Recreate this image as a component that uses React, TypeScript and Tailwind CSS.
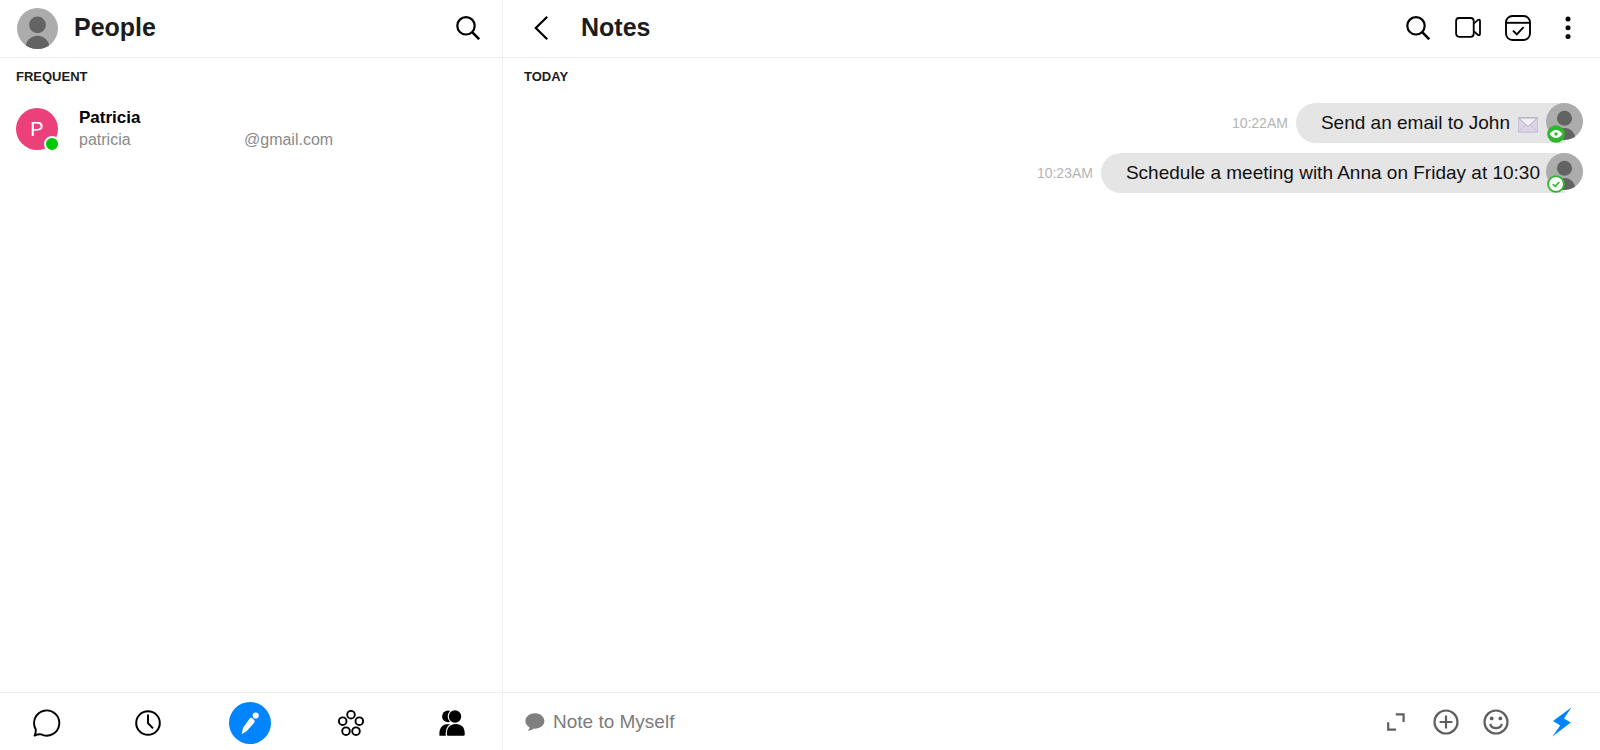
import React, { useState } from "react";

type IconProps = { className?: string };

function SearchIcon({ className }: IconProps) {
  return (
    <svg viewBox="0 0 24 24" className={className} fill="none" stroke="currentColor" aria-hidden="true">
      <circle cx="10" cy="9.8" r="8.7" strokeWidth="2.2" />
      <path d="M16.2 16.2L23.2 23.2" strokeWidth="2.6" />
    </svg>
  );
}

function PersonAvatar({ className }: IconProps) {
  return (
    <svg viewBox="0 0 42 42" className={className} role="img" aria-label="My profile">
      <defs>
        <clipPath id="avatar-round">
          <circle cx="21" cy="21" r="21" />
        </clipPath>
      </defs>
      <g clipPath="url(#avatar-round)">
        <rect width="42" height="42" fill="#acacac" />
        <circle cx="21" cy="17.3" r="8.6" fill="#636363" />
        <ellipse cx="21" cy="41" rx="12.3" ry="12.6" fill="#636363" />
      </g>
    </svg>
  );
}

function BackIcon() {
  return (
    <svg viewBox="0 0 14 24" className="h-6 w-[14px]" fill="none" stroke="currentColor" strokeWidth="2.2" aria-hidden="true">
      <path d="M13.2 0.8L1.8 12L13.2 23.2" />
    </svg>
  );
}

function VideoIcon() {
  return (
    <svg viewBox="0 0 26 26" className="size-[26px]" fill="none" stroke="currentColor" strokeWidth="1.8" aria-hidden="true">
      <rect x="1.1" y="3" width="17.6" height="18.8" rx="3" />
      <path d="M19 8.4L23 4.9Q25 3.9 25 6V18.8Q25 20.9 23 19.9L19 16.4" />
    </svg>
  );
}

function TaskIcon() {
  return (
    <svg viewBox="0 0 26 26" className="size-[26px]" fill="none" stroke="currentColor" strokeWidth="1.9" aria-hidden="true">
      <rect x="1" y="1" width="24" height="24" rx="6.4" />
      <path d="M1 7.8H25" />
      <path d="M8 15.6L11.8 19.4L18.6 12.2" />
    </svg>
  );
}

function DotsIcon() {
  return (
    <svg viewBox="0 0 6 24" className="h-6 w-[6px]" fill="currentColor" aria-hidden="true">
      <circle cx="3" cy="3" r="2.5" />
      <circle cx="3" cy="11.8" r="2.5" />
      <circle cx="3" cy="20.6" r="2.5" />
    </svg>
  );
}

function ChatIcon() {
  return (
    <svg viewBox="0 0 28 28" className="size-7" fill="none" stroke="currentColor" strokeWidth="1.9" strokeLinejoin="round" aria-hidden="true">
      <path d="M1.6 26.6C2.6 24.4 2.9 22.6 2.8 20.4A12.6 12.6 0 1 1 8.2 25.4C6 25.1 3.8 25.6 1.6 26.6Z" />
    </svg>
  );
}

function ClockIcon() {
  return (
    <svg viewBox="0 0 26 26" className="size-[26px]" fill="none" stroke="currentColor" strokeWidth="2" aria-hidden="true">
      <circle cx="13" cy="13" r="11.8" />
      <path d="M13 4.6V13.2L18 18.4" />
    </svg>
  );
}

function PencilIcon() {
  return (
    <svg viewBox="0 0 42 42" className="size-[42px]" fill="#ffffff" aria-hidden="true">
      <circle cx="26.7" cy="13.5" r="3.1" />
      <path d="M20.2 17.2Q21.8 15 23.4 16.2L25.2 17.9Q26.4 19.4 25 21L17.8 29L12.7 32.2L14 25.8Z" />
    </svg>
  );
}

function GroupsIcon() {
  return (
    <svg viewBox="0 0 26 26" className="size-[26px]" fill="none" stroke="currentColor" strokeWidth="1.9" aria-hidden="true">
      <circle cx="13" cy="4.7" r="3.8" />
      <circle cx="4.7" cy="11.2" r="3.8" />
      <circle cx="21.3" cy="11.2" r="3.8" />
      <circle cx="8" cy="21.2" r="3.8" />
      <circle cx="18" cy="21.2" r="3.8" />
    </svg>
  );
}

function PeopleIcon() {
  return (
    <svg viewBox="0 0 26 26" className="size-[26px]" fill="currentColor" aria-hidden="true">
      <circle cx="9" cy="6.4" r="5.9" />
      <path d="M0.4 25.7V23C0.4 18.4 3.2 14.8 7.4 14.2L13 14V25.7Z" />
      <path
        d="M7.9 24.7C7.4 18 10.8 14 16.8 14S26.2 18 25.7 24.7Q25.6 25.7 24.7 25.7H8.9Q8 25.7 7.9 24.7Z"
        stroke="#ffffff"
        strokeWidth="2.4"
        paintOrder="stroke"
      />
      <circle cx="16" cy="6.5" r="6.2" stroke="#ffffff" strokeWidth="2.2" paintOrder="stroke" />
    </svg>
  );
}

function BubbleIcon() {
  return (
    <svg viewBox="0 0 20 18" className="h-[18px] w-5 shrink-0" fill="#7f7f7f" aria-hidden="true">
      <path d="M10 0.3C4.6 0.3 0.4 3.7 0.4 8C0.4 10.8 2.1 13.2 4.7 14.5C4.5 15.8 3.7 16.9 2.5 17.7C4.9 17.8 7.2 17 8.8 15.6C14.8 16 19.4 12.5 19.4 8C19.4 3.7 15.2 0.3 10 0.3Z" />
    </svg>
  );
}

function ExpandIcon() {
  return (
    <svg viewBox="0 0 18 18" className="size-[18px]" fill="none" stroke="currentColor" strokeWidth="2.2" aria-hidden="true">
      <path d="M8.8 1.4H16.6V9" />
      <path d="M1.2 9.2V16.6H9" />
    </svg>
  );
}

function PlusIcon() {
  return (
    <svg viewBox="0 0 26 26" className="size-[26px]" fill="none" stroke="currentColor" strokeWidth="2.2" aria-hidden="true">
      <circle cx="13" cy="13" r="11.5" />
      <path d="M13 6.6V19.4M6.6 13H19.4" />
    </svg>
  );
}

function SmileIcon() {
  return (
    <svg viewBox="0 0 26 26" className="size-[26px]" fill="none" stroke="currentColor" strokeWidth="2.2" aria-hidden="true">
      <circle cx="13" cy="13" r="11.5" />
      <path d="M7 15C8.2 17.9 10.4 19.2 13 19.2S17.8 17.9 19 15" />
      <circle cx="8.7" cy="9.4" r="1.9" fill="currentColor" stroke="none" />
      <circle cx="17.3" cy="9.4" r="1.9" fill="currentColor" stroke="none" />
    </svg>
  );
}

function BoltIcon() {
  return (
    <svg viewBox="0 0 20 30" className="h-[30px] w-5" fill="#0084ff" aria-hidden="true">
      <path d="M19.6 0.2L1 14L8.2 18.6L0.2 29.8L18.8 15.6L12 11.4Z" />
    </svg>
  );
}

function EnvelopeIcon() {
  return (
    <svg viewBox="0 0 20 16" className="h-4 w-5" role="img" aria-label="Envelope">
      <rect x="0.4" y="0.8" width="19.2" height="14.4" rx="0.6" fill="#dcd5e8" stroke="#bdb5cc" strokeWidth="0.8" />
      <path d="M0.8 14.8L7.4 8M19.2 14.8L12.6 8" stroke="#c4bcd2" strokeWidth="0.8" fill="none" />
      <path d="M0.6 1L10 9.4L19.4 1Z" fill="#f3f0f8" stroke="#aaa2ba" strokeWidth="0.9" />
    </svg>
  );
}

function SeenBadge() {
  return (
    <svg viewBox="0 0 18 18" className="size-[18px]" role="img" aria-label="Seen">
      <circle cx="9" cy="9" r="8.8" fill="#2eb82e" />
      <path d="M2.6 9C4.4 6.2 6.6 4.9 9 4.9S13.6 6.2 15.4 9C13.6 11.8 11.4 13.1 9 13.1S4.4 11.8 2.6 9Z" fill="#ffffff" />
      <circle cx="9" cy="9" r="1.7" fill="#2eb82e" />
    </svg>
  );
}

function SentBadge() {
  return (
    <svg viewBox="0 0 18 18" className="size-[18px]" role="img" aria-label="Sent">
      <circle cx="9" cy="9" r="7.9" fill="#ffffff" stroke="#2eb82e" strokeWidth="1.9" />
      <path d="M5.8 9.2L8.2 11.3L12.2 7" fill="none" stroke="#2eb82e" strokeWidth="1.7" />
    </svg>
  );
}

type IconButtonProps = { label: string; className: string; children: React.ReactNode };

function IconButton({ label, className, children }: IconButtonProps) {
  return (
    <button type="button" aria-label={label} className={`flex shrink-0 items-center justify-center ${className}`}>
      {children}
    </button>
  );
}

type Message = { time: string; text: string; envelope: boolean; seen: boolean };

const messages: Message[] = [
  { time: "10:22AM", text: "Send an email to John", envelope: true, seen: true },
  { time: "10:23AM", text: "Schedule a meeting with Anna on Friday at 10:30", envelope: false, seen: false },
];

function MessageRow({ message }: { message: Message }) {
  return (
    <li className="flex items-center justify-end">
      <time className="mr-2 pb-[1px] text-sm text-[#b4b4b4]">{message.time}</time>
      <div className="flex h-10 rounded-l-[20px] bg-[#e5e5e5] pl-[25px]">
        <p className="flex items-center gap-2 pr-[6px] text-[19px] text-[#111111]">
          {message.text}
          {message.envelope && (
            <span className="mt-1 mr-[2px]">
              <EnvelopeIcon />
            </span>
          )}
        </p>
        <div className="w-[19px]" />
      </div>
      <div className="relative -ml-[19px] h-10 w-[37px]">
        <PersonAvatar className="size-[37px]" />
        <span className="absolute bottom-0 left-[1px]">{message.seen ? <SeenBadge /> : <SentBadge />}</span>
      </div>
    </li>
  );
}

export default function App() {
  const [note, setNote] = useState("");

  return (
    <div className="flex h-screen bg-white font-['Liberation_Sans',Arial,sans-serif] text-black">
      <aside className="flex w-[503px] shrink-0 flex-col border-r border-[#eeeeee]">
        <header className="flex h-[58px] shrink-0 items-center border-b border-[#eeeeee] pr-[10px] pb-[1px] pl-[17px]">
          <PersonAvatar className="size-[41px]" />
          <h1 className="ml-4 flex-1 pb-[1px] text-[25px] font-bold text-[#1c1c1c]">People</h1>
          <IconButton label="Search people" className="size-12">
            <SearchIcon className="size-6" />
          </IconButton>
        </header>

        <section className="flex-1 px-4">
          <h2 className="mt-[9px] text-[13px] leading-5 font-bold text-[#1c1c1c]">FREQUENT</h2>
          <ul className="mt-[19px]">
            <li className="flex items-center">
              <div className="relative flex size-[42px] items-center justify-center rounded-full bg-[#ec407a] text-xl text-white">
                P
                <span className="absolute -right-[2px] -bottom-[2px] size-4 rounded-full border-2 border-white bg-[#00c800]" />
              </div>
              <div className="ml-[21px]">
                <p className="text-[17px] leading-[23px] font-bold">Patricia</p>
                <p className="flex text-base leading-[22px] text-[#8a8a8a]">
                  <span className="w-[165px]">patricia</span>
                  <span>@gmail.com</span>
                </p>
              </div>
            </li>
          </ul>
        </section>

        <nav className="flex h-[58px] shrink-0 items-center justify-between border-t border-[#eeeeee] pt-[2px] pr-[25px] pl-[22px]">
          <IconButton label="Chats" className="size-[50px]"><ChatIcon /></IconButton>
          <IconButton label="Recent" className="size-[50px]"><ClockIcon /></IconButton>
          <IconButton label="Notes" className="size-[50px]">
            <span className="rounded-full bg-[#0084ff]"><PencilIcon /></span>
          </IconButton>
          <IconButton label="Groups" className="size-[50px]"><GroupsIcon /></IconButton>
          <IconButton label="People" className="size-[50px]"><PeopleIcon /></IconButton>
        </nav>
      </aside>

      <main className="flex min-w-0 flex-1 flex-col">
        <header className="flex h-[58px] shrink-0 items-center border-b border-[#eeeeee] pr-[7px] pb-[1px] pl-[14px]">
          <IconButton label="Back" className="size-12"><BackIcon /></IconButton>
          <h1 className="ml-4 flex-1 pb-[1px] text-[25px] font-bold text-[#1c1c1c]">Notes</h1>
          <IconButton label="Search notes" className="size-[50px]"><SearchIcon className="size-6" /></IconButton>
          <IconButton label="Video call" className="size-[50px]"><VideoIcon /></IconButton>
          <IconButton label="Tasks" className="size-[50px]"><TaskIcon /></IconButton>
          <IconButton label="More" className="size-[50px]"><DotsIcon /></IconButton>
        </header>

        <section className="flex-1 pr-[17px] pl-[21px]">
          <h2 className="mt-[9px] text-[13px] leading-5 font-bold text-[#1c1c1c]">TODAY</h2>
          <ul className="mt-4 flex flex-col gap-[10px]">
            {messages.map((message) => (
              <MessageRow key={message.time} message={message} />
            ))}
          </ul>
        </section>

        <form
          className="flex h-[58px] shrink-0 items-center border-t border-[#eeeeee] pt-[1px] pr-[13px] pl-[22px] text-[#5f5f5f]"
          onSubmit={(event) => event.preventDefault()}
        >
          <label htmlFor="note" aria-label="Note to Myself"><BubbleIcon /></label>
          <input
            id="note"
            value={note}
            onChange={(event) => setNote(event.target.value)}
            placeholder="Note to Myself"
            className="ml-2 min-w-0 flex-1 text-[19px] text-black outline-none placeholder:text-[#7c7c7c]"
          />
          <IconButton label="Expand" className="size-[50px]"><ExpandIcon /></IconButton>
          <IconButton label="Add attachment" className="size-[50px]"><PlusIcon /></IconButton>
          <IconButton label="Insert emoji" className="size-[50px]"><SmileIcon /></IconButton>
          <IconButton label="Quick send" className="ml-4 size-[50px]"><BoltIcon /></IconButton>
        </form>
      </main>
    </div>
  );
}
